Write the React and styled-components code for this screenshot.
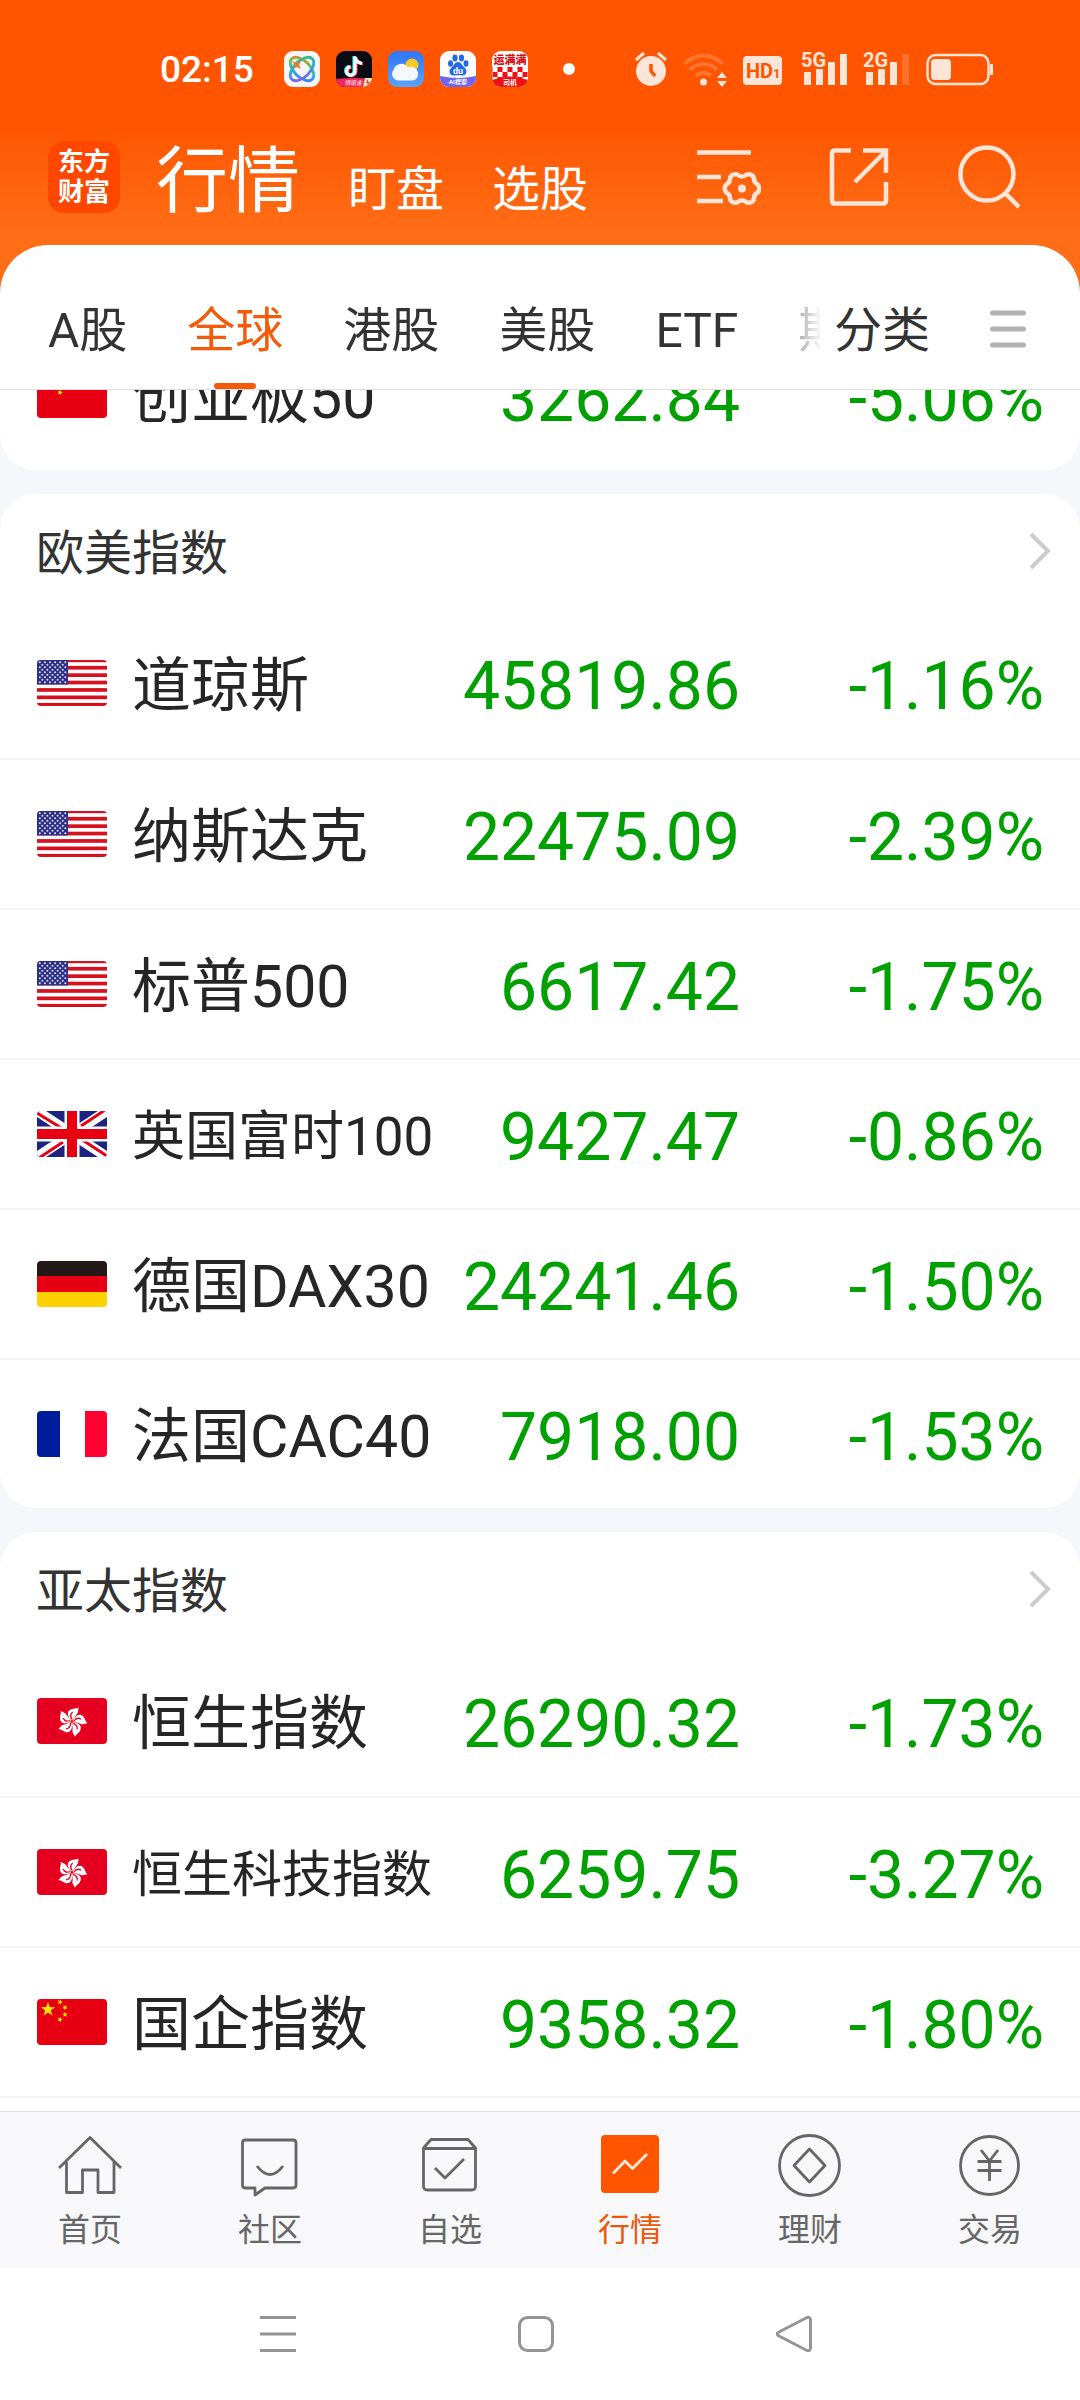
import React, { useLayoutEffect, useRef } from "react";
import styled, { createGlobalStyle, css } from "styled-components";

const sans = `Roboto, "Noto Sans CJK SC", sans-serif`;

const quotes = {
  china: [{ flag: "cn", name: "创业板50", price: "3262.84", change: "-5.06%" }],
  west: [
    { flag: "us", name: "道琼斯", price: "45819.86", change: "-1.16%" },
    { flag: "us", name: "纳斯达克", price: "22475.09", change: "-2.39%" },
    { flag: "us", name: "标普500", price: "6617.42", change: "-1.75%" },
    { flag: "uk", name: "英国富时100", price: "9427.47", change: "-0.86%", size: "medium" },
    { flag: "de", name: "德国DAX30", price: "24241.46", change: "-1.50%" },
    { flag: "fr", name: "法国CAC40", price: "7918.00", change: "-1.53%" },
  ],
  asia: [
    { flag: "hk", name: "恒生指数", price: "26290.32", change: "-1.73%" },
    { flag: "hk", name: "恒生科技指数", price: "6259.75", change: "-3.27%", size: "small" },
    { flag: "cn", name: "国企指数", price: "9358.32", change: "-1.80%" },
  ],
};

const tabs = ["A股", "全球", "港股", "美股", "ETF", "期"];

const STAR = "M0-10L2.4-3.2L9.5-3.1L3.8 1.2L5.9 8.1L0 4L-5.9 8.1L-3.8 1.2L-9.5-3.1L-2.4-3.2Z";

function Flag({ code }) {
  return (
    <FlagBox viewBox="0 0 70 46" aria-hidden="true">
      {code === "cn" && (
        <>
          <rect width="70" height="46" fill="#e60012" />
          <g fill="#ffe100">
            <path d={STAR} transform="translate(11 10.500) scale(.76)" />
            <path d={STAR} transform="translate(23 3) rotate(20) scale(.3)" />
            <path d={STAR} transform="translate(28 8.500) rotate(40) scale(.3)" />
            <path d={STAR} transform="translate(28 15.500) scale(.3)" />
            <path d={STAR} transform="translate(23 20.500) rotate(20) scale(.3)" />
          </g>
        </>
      )}
      {code === "us" && (
        <>
          <rect width="70" height="46" fill="#fff" />
          {[0, 1, 2, 3, 4, 5, 6].map((n) => (
            <rect key={n} y={n * 7.4 - 1.5} width="70" height="3.7" fill="#d7101e" />
          ))}
          <rect width="31" height="24.500" fill="#2b2f86" />
          {[0, 1, 2, 3, 4, 5, 6, 7, 8].map((r) =>
            [0, 1, 2, 3, 4, 5].map((c) =>
              r % 2 && c === 5 ? null : (
                <circle key={`${r}-${c}`} cx={2.8 + c * 5.1 + (r % 2) * 2.5} cy={2.3 + r * 2.5} r="1" fill="#dfe0f2" />
              )
            )
          )}
        </>
      )}
      {code === "uk" && (
        <>
          <rect width="70" height="46" fill="#1d2381" />
          <path d="M0 0L70 46M70 0L0 46" stroke="#fff" strokeWidth="10" />
          <path d="M0 2L26 18M44 15L68 -1M26 31L2 47M44 28L70 45" stroke="#e60012" strokeWidth="3" />
          <path d="M35 0V46M0 23H70" stroke="#fff" strokeWidth="15" />
          <path d="M35 0V46M0 23H70" stroke="#e60012" strokeWidth="10" />
        </>
      )}
      {code === "de" && (
        <>
          <rect width="70" height="15" fill="#231815" />
          <rect y="15" width="70" height="16" fill="#e60012" />
          <rect y="31" width="70" height="15" fill="#fdd000" />
        </>
      )}
      {code === "fr" && (
        <>
          <rect width="70" height="46" fill="#fff" />
          <rect width="23" height="46" fill="#001c9a" />
          <rect x="48" width="22" height="46" fill="#ff0030" />
        </>
      )}
      {code === "hk" && (
        <>
          <rect width="70" height="46" fill="#e60020" />
          {[10, 82, 154, 226, 298].map((a) => (
            <g key={a} transform={`translate(35 23.500) rotate(${a})`}>
              <path d="M0 -1C-5 -3 -8 -9 -3 -12C-1 -13.500 2 -13 4 -15C4 -12 5 -10 3 -7.500C1.500 -5.500 2 -3 0 -1Z" fill="#fff" />
              <path d="M0 -2C-2.500 -4 -3 -7 -1 -9.500" fill="none" stroke="#e60020" strokeWidth="1.200" />
            </g>
          ))}
        </>
      )}
    </FlagBox>
  );
}

function AppIcons() {
  return (
    <>
      <AppIcon viewBox="0 0 36 36" aria-hidden="true">
        <defs>
          <linearGradient id="orbit" x1="0" y1="0" x2="1" y2="1">
            <stop offset="0" stopColor="#ff7a1a" />
            <stop offset=".35" stopColor="#5cc94b" />
            <stop offset=".65" stopColor="#2aa7e8" />
            <stop offset="1" stopColor="#3f6df0" />
          </linearGradient>
          <linearGradient id="orbit2" x1="1" y1="0" x2="0" y2="1">
            <stop offset="0" stopColor="#34c26b" />
            <stop offset=".5" stopColor="#2aa7e8" />
            <stop offset="1" stopColor="#9a4fe0" />
          </linearGradient>
        </defs>
        <rect width="36" height="36" fill="#f7f5f7" />
        <g fill="none" strokeWidth="2.800">
          <ellipse cx="18" cy="18" rx="14.500" ry="8" transform="rotate(45 18 18)" stroke="url(#orbit)" />
          <ellipse cx="18" cy="18" rx="14.500" ry="8" transform="rotate(-45 18 18)" stroke="url(#orbit2)" />
        </g>
        <path d="M8 10L13 12L17 10L15 14L17 18L13 16L9 18L11 14Z" fill="#f07a1c" />
      </AppIcon>
      <AppIcon viewBox="0 0 36 36" aria-hidden="true">
        <rect width="36" height="36" fill="#0b0b14" />
        <g fill="none" strokeWidth="3.200">
          <path d="M18 5V19.500A4.200 4.200 0 1 1 13.500 15.400M18 6C19 10 21.500 11.500 25 11.800" stroke="#25f4ee" />
          <path d="M20 6V20.500A4.200 4.200 0 1 1 15.500 16.400M20 7C21 11 23.500 12.500 27 12.800" stroke="#fe2c55" />
          <path d="M19 5.500V20A4.200 4.200 0 1 1 14.500 15.900M19 6.500C20 10.500 22.500 12 26 12.300" stroke="#fff" />
        </g>
        <path d="M0 28Q18 26 36 28V36H0Z" fill="#f0285c" />
        <path d="M29 27H36V36H27Z" fill="#ffe2a8" />
        <path d="M32 28L30 32H32L31 35L34 31H32Z" fill="#f0285c" />
        <SvgText x="8" y="34" fontSize="6" fontStyle="italic" fill="#fff">领现金</SvgText>
      </AppIcon>
      <AppIcon viewBox="0 0 36 36" aria-hidden="true">
        <defs>
          <linearGradient id="sky" x1="0" y1="0" x2="0" y2="1">
            <stop offset="0" stopColor="#2f74f7" />
            <stop offset="1" stopColor="#5aa4fb" />
          </linearGradient>
        </defs>
        <rect width="36" height="36" fill="url(#sky)" />
        <circle cx="24" cy="14" r="6.500" fill="#ffc928" />
        <path d="M11 29.500A6.500 6.500 0 0 1 5.500 19A8 8 0 0 1 20 16.500A7 7 0 0 1 30 22C30.500 26 28 29.500 24 29.500Z" fill="#f4f8ff" />
      </AppIcon>
      <AppIcon viewBox="0 0 36 36" aria-hidden="true">
        <rect width="36" height="36" fill="#fff" />
        <g fill="#2468e8">
          <ellipse cx="10.500" cy="12.500" rx="2.500" ry="3.300" />
          <ellipse cx="15" cy="7" rx="2.600" ry="3.400" />
          <ellipse cx="21.500" cy="7" rx="2.600" ry="3.400" />
          <ellipse cx="26" cy="12.500" rx="2.500" ry="3.300" />
          <path d="M18 11C21 11 22 14 24 16C28 19 27 25 22 24.500C19 24 17 24 14 24.500C9 25 8 19 12 16C14 14 15 11 18 11Z" />
        </g>
        <SvgText x="18" y="23" fontSize="9" fontWeight="700" textAnchor="middle" fill="#fff">du</SvgText>
        <path d="M0 25Q18 29 36 25V36H0Z" fill="#6f63f6" />
        <SvgText x="18" y="33" fontSize="6" fontWeight="700" textAnchor="middle" fill="#fff">·AI搜索·</SvgText>
      </AppIcon>
      <AppIcon viewBox="0 0 36 36" aria-hidden="true">
        <rect width="36" height="36" fill="#fff" />
        <SvgText x="18" y="13" fontSize="11" fontWeight="900" textAnchor="middle" fill="#d8101a">运满满</SvgText>
        {[0, 1, 2].map((r) =>
          [0, 1, 2, 3].map((c) => (
            <rect key={`${r}-${c}`} x={c * 10 + (r % 2 ? 0 : -5) + 0.5} y={16 + r * 5} width="5" height="5" fill="#ee1111" />
          ))
        )}
        <path d="M0 29Q18 22 36 29V36H0Z" fill="#ee1111" />
        <SvgText x="18" y="34" fontSize="7" fontWeight="700" textAnchor="middle" fill="#fff">司机</SvgText>
      </AppIcon>
    </>
  );
}

function Signal({ label, weak }) {
  return (
    <StatusIcon $width={46} viewBox="0 0 46 36" aria-label={label}>
      <SvgText x="0" y="16" fontSize="20" fontWeight="700">{label}</SvgText>
      <rect x="3" y="21" width="7" height="13" />
      <rect x="15" y="18" width="7" height="16" />
      <rect x="27" y="11" width="7" height="23" />
      <rect x="39" y="3" width="7" height="31" opacity={weak ? 0.2 : 1} />
    </StatusIcon>
  );
}

function StatusIcons() {
  return (
    <StatusRight>
      <StatusIcon $width={32} viewBox="0 0 32 36" aria-label="闹钟">
        <circle cx="16" cy="20" r="15" />
        <path d="M1 9L9 2M31 9L23 2" stroke="#ffe5d8" strokeWidth="3" />
        <path d="M16 13V20L20 25" fill="none" stroke="#ff5500" strokeWidth="3.500" />
      </StatusIcon>
      <StatusIcon $width={44} viewBox="0 0 44 36" aria-label="无线网络">
        <g fill="none" stroke="#ffe5d8" strokeWidth="4" opacity=".22">
          <path d="M1.500 13A26 26 0 0 1 39.500 13" />
          <path d="M7 19A18 18 0 0 1 34 19" />
          <path d="M13 25A11 11 0 0 1 28 25" />
        </g>
        <circle cx="20.500" cy="31" r="3.500" />
        <path d="M34 27L39 21L44 27ZM34 30L39 36L44 30Z" />
      </StatusIcon>
      <StatusIcon $width={42} viewBox="0 0 42 36" aria-label="HD1">
        <rect y="5" width="39" height="29" rx="4" />
        <SvgText x="3" y="27" fontSize="20" fontWeight="700" fill="#ff5500">HD</SvgText>
        <SvgText x="30" y="27" fontSize="13" fontWeight="700" fill="#ff5500">1</SvgText>
      </StatusIcon>
      <Signal label="5G" />
      <Signal label="2G" weak />
      <StatusIcon $width={68} viewBox="0 0 68 36" aria-label="电量">
        <rect x="2.500" y="4" width="61" height="29" rx="8" fill="none" stroke="#ffe5d8" strokeWidth="2.400" />
        <rect x="6" y="8" width="20" height="21" rx="4" />
        <rect x="65" y="13" width="3" height="11" rx="1" />
      </StatusIcon>
    </StatusRight>
  );
}

function QuoteCard({ title, rows, open }) {
  return (
    <Card $open={open}>
      {title && (
        <CardHead href="#">
          <h2>{title}</h2>
          <Chevron viewBox="0 0 22 38" aria-hidden="true">
            <path d="M2 2L19 19L2 36" />
          </Chevron>
        </CardHead>
      )}
      <QuoteTable>
        <tbody>
          {rows.map((row) => (
            <tr key={row.name}>
              <NameCell $size={row.size}>
                <div>
                  <Flag code={row.flag} />
                  <span>{row.name}</span>
                </div>
              </NameCell>
              <PriceCell>{row.price}</PriceCell>
              <ChangeCell>{row.change}</ChangeCell>
            </tr>
          ))}
        </tbody>
      </QuoteTable>
    </Card>
  );
}

const navItems = [
  {
    label: "首页",
    icon: <path d="M1 34L32 3.500L63 34M8.500 28V58.500H24.500V36H40V58.500H56V28" />,
  },
  {
    label: "社区",
    icon: (
      <>
        <path d="M7 6H55Q58 6 58 9V51Q58 54 55 54H27L17 61V54H7Q4.500 54 4.500 51V9Q4.500 6 7 6Z" />
        <path d="M19 32Q32 49 45 32" />
      </>
    ),
  },
  {
    label: "自选",
    icon: (
      <>
        <path d="M5.500 14L13 5.500H50L57.500 14V52Q57.500 56 53.500 56H9.500Q5.500 56 5.500 52ZM5.500 14.500H57.500" />
        <path d="M17 34L27 44L46 25" />
      </>
    ),
  },
  {
    label: "行情",
    active: true,
    icon: (
      <>
        <rect x="3" y="1" width="58" height="58" rx="4" fill="#ff5500" stroke="none" />
        <path d="M15 39.500L27 27L34.500 34.500L49 20" stroke="#ffe9de" />
      </>
    ),
  },
  {
    label: "理财",
    icon: (
      <>
        <circle cx="31.500" cy="31.500" r="30" />
        <path d="M31.500 15L47 31.500L31.500 48L16 31.500Z" />
      </>
    ),
  },
  {
    label: "交易",
    icon: (
      <>
        <circle cx="31.500" cy="31.500" r="29" />
        <path d="M23 16L31.500 27L40 16M19.500 27.500H43.500M19.500 36.500H43.500M31.500 27V47" />
      </>
    ),
  },
];

export default function App() {
  const list = useRef(null);

  useLayoutEffect(() => {
    list.current.scrollTop = 70;
  }, []);

  return (
    <Page>
      <GlobalStyle />
      <Header>
        <StatusBar>
          <Time>02:15</Time>
          <AppRow>
            <AppIcons />
          </AppRow>
          <Dot />
          <StatusIcons />
        </StatusBar>
        <TitleBar>
          <Logo>
            东方
            <br />
            财富
          </Logo>
          <Titles>
            <TitleLink href="#" $current>行情</TitleLink>
            <TitleLink href="#">盯盘</TitleLink>
            <TitleLink href="#">选股</TitleLink>
          </Titles>
          <Tools>
            <ToolButton aria-label="设置">
              <svg viewBox="0 0 64 64">
                <path d="M0 7.500H54M0 32H24M0 56H26" />
                <path
                  d="M41 30C43 32 47 32 49 30C52 28 57 30 57 34C57 37 58 38 60 39C63 41 63 46 60 48C58 49 57 50 57 53C57 57 52 59 49 57C47 55 43 55 41 57C38 59 33 57 33 53C33 50 32 49 30 48C27 46 27 41 30 39C32 38 33 37 33 34C33 30 38 28 41 30Z"
                />
                <circle cx="45" cy="43.500" r="4" fill="#ffe5d8" stroke="none" />
              </svg>
            </ToolButton>
            <ToolButton aria-label="分享">
              <svg viewBox="0 0 64 64">
                <path d="M24 5.500H8Q5 5.500 5 8.500V55.500Q5 58.500 8 58.500H56Q59 58.500 59 55.500V37" />
                <path d="M36 5.500H59V28M58 7L28 37" />
              </svg>
            </ToolButton>
            <ToolButton aria-label="搜索">
              <svg viewBox="0 0 64 64">
                <circle cx="30" cy="29" r="26.500" />
                <path d="M48 48L62 62" />
              </svg>
            </ToolButton>
          </Tools>
        </TitleBar>
      </Header>

      <Tabs>
        <TabScroller>
          {tabs.map((tab) => (
            <Tab key={tab} href="#" $active={tab === "全球"}>{tab}</Tab>
          ))}
        </TabScroller>
        <Category>分类</Category>
        <MenuButton aria-label="菜单">
          <svg viewBox="0 0 36 38">
            <path d="M2.500 3H33.500M2.500 19H33.500M2.500 35H33.500" />
          </svg>
        </MenuButton>
      </Tabs>

      <List ref={list}>
        <QuoteCard rows={quotes.china} />
        <QuoteCard title="欧美指数" rows={quotes.west} />
        <QuoteCard title="亚太指数" rows={quotes.asia} open />
      </List>

      <BottomNav>
        {navItems.map((item) => (
          <NavLink key={item.label} href="#" $active={item.active}>
            <svg viewBox="0 0 64 64" aria-hidden="true">{item.icon}</svg>
            {item.label}
          </NavLink>
        ))}
      </BottomNav>

      <SystemNav>
        <SystemButton aria-label="最近任务">
          <svg viewBox="0 0 36 36">
            <path d="M0 1.500H36M0 18H36M0 34.500H36" />
          </svg>
        </SystemButton>
        <SystemButton aria-label="主屏幕">
          <svg viewBox="0 0 36 36">
            <rect x="1.500" y="1.500" width="33" height="33" rx="8" />
          </svg>
        </SystemButton>
        <SystemButton aria-label="返回">
          <svg viewBox="0 0 36 36">
            <path d="M30 2Q34.500 0 34.500 4V32Q34.500 36 30 34L3 20Q-.5 18 3 16Z" />
          </svg>
        </SystemButton>
      </SystemNav>
    </Page>
  );
}

const GlobalStyle = createGlobalStyle`
  * {
    box-sizing: border-box;
  }

  body {
    margin: 0;
    background: #ff6d16;
    font-family: ${sans};
  }

  a {
    color: inherit;
    text-decoration: none;
  }

  button {
    padding: 0;
    border: 0;
    background: none;
    font: inherit;
    color: inherit;
  }

  svg {
    display: block;
    flex: none;
  }
`;

const Page = styled.div`
  display: flex;
  flex-direction: column;
  height: 100vh;
  background: linear-gradient(#ff5500 125px, #ff6d16 230px);
`;

const Header = styled.header`
  flex: none;
  color: #fff;
`;

const StatusBar = styled.div`
  display: flex;
  align-items: center;
  height: 138px;
  padding: 0 87px 0 160px;
`;

const Time = styled.time`
  width: 96px;
  margin-right: 28px;
  padding-top: 2px;
  font-size: 37px;
  font-weight: 500;
  line-height: 40px;
`;

const AppRow = styled.div`
  display: flex;
  gap: 16px;
`;

const AppIcon = styled.svg`
  width: 36px;
  height: 36px;
  border-radius: 9px;
`;

const SvgText = styled.text`
  font-family: ${sans};
`;

const Dot = styled.span`
  width: 12px;
  height: 12px;
  margin-left: 35px;
  border-radius: 50%;
  background: #fff;
`;

const StatusRight = styled.div`
  display: flex;
  gap: 16px;
  margin-left: auto;
`;

const StatusIcon = styled.svg`
  width: ${(p) => p.$width}px;
  height: 36px;
  fill: #ffe5d8;
  overflow: visible;
`;

const TitleBar = styled.div`
  display: flex;
  align-items: center;
  height: 107px;
  padding: 0 59px 30px 48px;
`;

const Logo = styled.div`
  width: 72px;
  height: 72px;
  padding-top: 6px;
  border-radius: 16px;
  background: #ff4700;
  font-size: 26px;
  font-weight: 700;
  line-height: 30px;
  text-align: center;
`;

const Titles = styled.nav`
  display: flex;
  align-items: baseline;
  gap: 48px;
  margin-left: 36px;
  padding-top: 10px;
`;

const TitleLink = styled.a`
  font-size: ${(p) => (p.$current ? 72 : 48)}px;
  line-height: 1;
`;

const Tools = styled.div`
  display: flex;
  gap: 66px;
  margin-left: auto;
`;

const ToolButton = styled.button`
  svg {
    width: 64px;
    height: 64px;
    fill: none;
    stroke: #ffe5d8;
    stroke-width: 4.500;
  }
`;

const Tabs = styled.nav`
  display: flex;
  flex: none;
  align-items: stretch;
  height: 145px;
  padding: 0 54px 0 48px;
  border-bottom: 1px solid #ddd;
  border-radius: 48px 48px 0 0;
  background: #fff;
  color: #333;
  font-size: 48px;
`;

const TabScroller = styled.div`
  display: flex;
  flex: 1;
  gap: 60px;
  min-width: 0;
  overflow: hidden;
  mask-image: linear-gradient(to left, transparent, #000 60px);
`;

const tabText = css`
  padding-top: 28px;
  line-height: 116px;
`;

const Tab = styled.a`
  ${tabText}
  position: relative;
  flex: none;

  ${(p) =>
    p.$active &&
    css`
      color: #f55a0a;

      &::after {
        content: "";
        position: absolute;
        bottom: 0;
        left: calc(50% - 21px);
        width: 42px;
        height: 6px;
        border-radius: 3px;
        background: #f55a0a;
      }
    `}
`;

const Category = styled.button`
  ${tabText}
  flex: none;
  margin: 0 60px 0 12px;
`;

const MenuButton = styled.button`
  padding-top: 24px;

  svg {
    width: 36px;
    height: 38px;
    stroke: #b2b2b2;
    stroke-width: 5;
    stroke-linecap: round;
  }
`;

const List = styled.main`
  display: flex;
  flex: 1;
  flex-direction: column;
  gap: 24px;
  min-height: 0;
  overflow-y: auto;
  background: #f6f7fa;
  scrollbar-width: none;
`;

const divider = "2px solid #f4f4f5";

const Card = styled.section`
  flex: none;
  border-radius: 36px;
  background: #fff;
  overflow: hidden;

  tr + tr td {
    border-top: ${divider};
  }

  ${(p) =>
    p.$open &&
    css`
      border-radius: 36px 36px 0 0;

      &::after {
        content: "";
        display: block;
        height: 36px;
        border-top: ${divider};
      }
    `}

  &:first-child {
    border-radius: 0 0 36px 36px;
  }
`;

const CardHead = styled.a`
  display: flex;
  align-items: center;
  justify-content: space-between;
  height: 114px;
  padding: 0 29px 0 36px;

  h2 {
    margin: 0;
    padding-bottom: 4px;
    color: #333;
    font-size: 48px;
    font-weight: 400;
  }
`;

const Chevron = styled.svg`
  width: 22px;
  height: 38px;
  fill: none;
  stroke: #ccc;
  stroke-width: 4;
`;

const QuoteTable = styled.table`
  width: 100%;
  border-collapse: separate;
  border-spacing: 0;
  table-layout: fixed;

  td {
    height: 150px;
    padding: 0;
    white-space: nowrap;
  }
`;

const nameSizes = { medium: 53, small: 50 };

const NameCell = styled.td`
  color: #262626;
  font-size: ${(p) => nameSizes[p.$size] || 59}px;
  line-height: 72px;

  div {
    display: flex;
    align-items: center;
    gap: 25px;
    padding-left: 37px;
  }

  span {
    padding-top: 6px;
  }
`;

const FlagBox = styled.svg`
  width: 70px;
  height: 46px;
  border-radius: 4px;
`;

const numberCell = css`
  color: #00a000;
  font-size: 66px;
  line-height: 72px;
  text-align: right;

  &&& {
    padding-top: 8px;
  }
`;

const PriceCell = styled.td`
  ${numberCell}
  width: 300px;
`;

const ChangeCell = styled.td`
  ${numberCell}
  width: 340px;

  &&& {
    padding-right: 36px;
  }
`;

const BottomNav = styled.nav`
  display: grid;
  flex: none;
  grid-template-columns: repeat(6, 1fr);
  height: 157px;
  padding-top: 22px;
  border-top: 1px solid #ddd;
  background: #f8f8fa;
`;

const NavLink = styled.a`
  display: flex;
  flex-direction: column;
  align-items: center;
  gap: 14px;
  color: ${(p) => (p.$active ? "#e8590c" : "#666")};
  font-size: 32px;
  line-height: 36px;

  svg {
    width: 64px;
    height: 64px;
    fill: none;
    stroke: #666;
    stroke-width: 2.800;
    stroke-linejoin: round;
  }
`;

const SystemNav = styled.nav`
  display: flex;
  flex: none;
  align-items: center;
  justify-content: center;
  gap: 222px;
  height: 132px;
  padding-right: 8px;
  background: #fff;
`;

const SystemButton = styled.button`
  svg {
    width: 36px;
    height: 36px;
    fill: none;
    stroke: #949494;
    stroke-width: 3;
  }
`;
